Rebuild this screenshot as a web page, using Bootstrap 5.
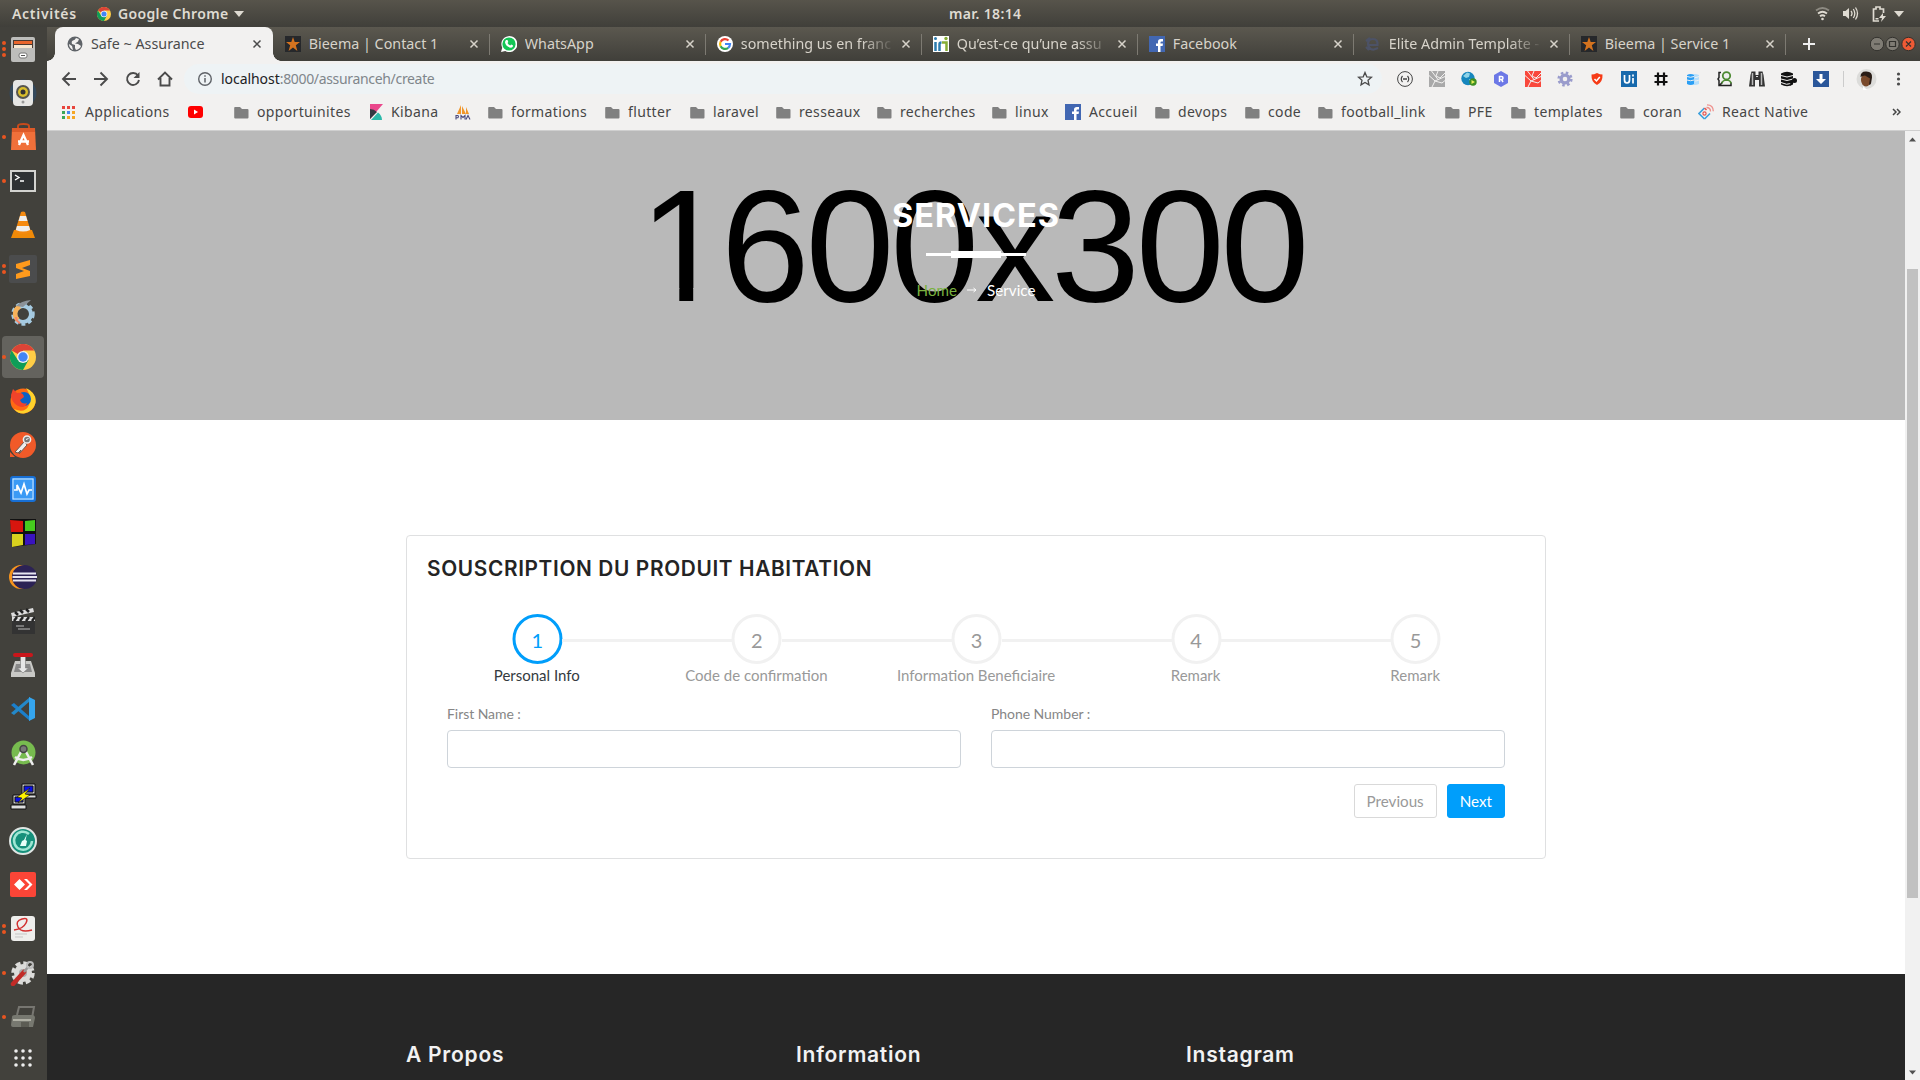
<!DOCTYPE html>
<html lang="fr">
<head>
<meta charset="utf-8">
<title>Safe ~ Assurance</title>
<link href="https://cdn.jsdelivr.net/npm/bootstrap@5.3.0/dist/css/bootstrap.min.css" rel="stylesheet">
<style>
body{width:1920px;height:1080px;overflow:hidden;background:#fff;font-family:"Noto Sans","Open Sans",sans-serif;font-size:14px;line-height:20px}
svg{display:block;flex:none}
.desk{height:1080px}
.topbar{height:27px;background:linear-gradient(#57544b,#403f3a);color:#dfdbd2;font-weight:600;font-size:14px;display:grid;grid-template-columns:97px 21px 116px 1fr 70px 901px;letter-spacing:.35px}
.topbar>*{align-self:center}
.topbar span{white-space:nowrap}
.lbl-act{padding-left:12px;letter-spacing:.7px}
.tray{display:grid;grid-template-columns:27px 30px 22px 10px;justify-content:end;align-items:center;padding-right:15px;position:relative;left:-1px}
.dock{width:47px;background:#42413c;flex:none}
.dock-item{height:44px;position:relative;display:flex;align-items:center;justify-content:center;padding-right:1px}
.dock-item.running::before{content:"";position:absolute;left:2px;top:20px;width:4px;height:4px;border-radius:50%;background:#e95420}
.dock-item.two::before{top:17px;box-shadow:0 6px #e95420}
.dock-item.three::before{top:14px;box-shadow:0 6px #e95420,0 12px #e95420}
.dock-item.current>span{position:absolute;left:2px;top:1px;width:42px;height:42px;background:#64635e;border-radius:4px}
.dock-item.current::before{z-index:1}
.dock-item svg{position:relative;top:-.5px}
.tabs{height:34px;background:linear-gradient(#5b584f,#403f3a);display:flex;padding-left:8px;color:#d7d3ca}
.tab{width:216px;height:34px;display:flex;align-items:center;padding:0 8px 0 11px;position:relative}
.tab:not(.on)::after{content:"";position:absolute;right:0;top:7px;width:1px;height:21px;background:#7d7a72}
.tab.on{background:#f2f1f0;color:#4b4b4b;border-radius:8px 8px 0 0;width:218px;margin-right:.8px;padding-left:12px}
.tab.on::before,.tab.on::after{content:"";position:absolute;bottom:0;width:8px;height:8px}
.tab.on::before{left:-8px;background:radial-gradient(circle at 0 0,transparent 7.5px,#f2f1f0 8px)}
.tab.on::after{right:-8px;background:radial-gradient(circle at 100% 0,transparent 7.5px,#f2f1f0 8px)}
.tab-name{margin-left:8px;width:154px;overflow:hidden;white-space:nowrap;flex:none;font-size:14.3px}
.fade-end .tab-name{-webkit-mask-image:linear-gradient(90deg,#000 78%,transparent);mask-image:linear-gradient(90deg,#000 78%,transparent)}
.tab>svg:last-child{margin-left:auto}
.toolbar{height:36px;background:#f2f1f0;padding-left:14px}
.navs{display:grid;grid-template-columns:repeat(4,32px);width:123px}
.address{width:1198px;height:30px;border-radius:15px;background:#eef3f5;color:#80868b;padding:0 9px 0 13px;font-size:14px;letter-spacing:-.33px}
.address b{font-weight:400;color:#202124;letter-spacing:-.05px}
.exts{display:grid;grid-template-columns:repeat(14,32px);justify-items:center;align-items:center;margin-left:7px}
.marks{height:34px;background:#f2f1f0;border-bottom:1px solid #cfcfcf;padding-left:15px;padding-bottom:3px;display:grid;grid-template-columns:126px 46px 135px 86px 33px 117px 85px 86px 101px 115px 73px 90px 90px 73px 127px 66px 109px 78px 194px 1fr;color:#464646;letter-spacing:.35px}
.marks>div{display:flex;align-items:center;gap:8px;white-space:nowrap}
.page-area{height:949px}
.site{width:1858px;font-family:Lato,sans-serif;color:#868686}
.hero{height:289px;background:#b9b9b9;position:relative;text-align:center;color:#fff}
.hero-bg{position:absolute;left:0;right:0;top:28px;padding-left:589px;text-align:left;font:160px/174px "Liberation Sans",sans-serif;letter-spacing:-4.2px;color:#000}
.hero-bg span{display:inline-block;margin:0 -3px 0 3px;clip-path:polygon(0 0,100% 0,100% 129px,54.2px 129px,54.2px 100%,40.3px 100%,40.3px 129px,0 129px)}
.hero-in{position:relative;padding-top:66px}
.hero h1{font:700 32.5px/38px Inter,sans-serif;margin:0;letter-spacing:1px}
.rule{width:100px;height:3px;background:#fff;margin:18px auto 0;display:flex;justify-content:center;align-items:center}
.rule i{width:50px;height:7px;background:#fff;flex:none}
.crumb{margin-top:23px;font-size:15.2px;line-height:22px;gap:10px}
.crumb a{color:#78b13f;text-decoration:none}
.wizard{width:1140px;height:324px;margin:115px 0 115px 359px;border:1px solid #dfe0e1;border-radius:4px;padding:19px 20px}
.wizard h2{font:600 20.8px/28px Inter,sans-serif;color:#242424;margin:0 0 31px;letter-spacing:.65px}
.step{flex:1;text-align:center;font-size:15px;line-height:22px;color:#999;position:relative}
.step+.step::before{content:"";position:absolute;height:3px;top:25px;right:calc(50% + 24px);width:170px;background:#f1f1f1}
.dot{width:50px;height:50px;border-radius:50%;border:3px solid #f1f1f1;margin:0 auto;font-size:20px;line-height:46px;transform:translateX(.5px)}
.step.active{color:#343a40}
.step.active .dot{border-color:#009efb;color:#009efb}
.fields{padding:18px 20px 0;gap:30px}
.fields label{font-size:14px;line-height:20px;display:block;margin-bottom:6px;letter-spacing:-.05px}
.fields .form-control{height:38px;border-color:#ced4da;border-radius:4px}
.acts{padding:16px 20px 0;gap:10px}
.acts .btn{font-size:15.2px;line-height:22px;height:34px;padding:5px 12px;border-radius:3px}
.btn-prev{border:1px solid #d9d9d9;color:#999}
.btn-next{background:#009efb;color:#fff;border-color:#009efb}
.foot{height:106px;background:#262626;padding:66px 0 0 359px;display:grid;grid-template-columns:390px 390px 1fr}
.foot h3{font:600 21px/30px Inter,sans-serif;color:#f2f2f2;margin:0;letter-spacing:.75px}
.sbar{width:15px;background:#f1f1f1;display:flex;flex-direction:column;align-items:center;padding:6px 0 5px}
.thumb{width:11px;height:629px;background:#c1c1c1;margin-top:127px}
</style>
<script src="https://cdn.jsdelivr.net/npm/bootstrap@5.3.0/dist/js/bootstrap.bundle.min.js"></script>
</head>
<body>
<svg width="0" height="0" class="position-absolute">
<symbol id="chrome" viewBox="0 0 26 26"><circle cx="13" cy="13" r="13" fill="#ffcd46"/><path d="M13 13L1.700 6.500A13 13 0 0 1 24.300 6.500H13z" fill="#db4437"/><path d="M13 13L7.800 16 1.700 6.500A13 13 0 0 0 13 26l5.500-10z" fill="#0f9d58"/><circle cx="13" cy="13" r="6" fill="#f1f1f1"/><circle cx="13" cy="13" r="4.700" fill="#4285f4"/></symbol>
<symbol id="folder" viewBox="0 0 15 13"><path d="M1 1h5l2 2h5.500q1 0 1 1v7.500q0 1-1 1H1.200q-1 0-1-1V2q0-1 .8-1z" fill="#808080"/></symbol>
<symbol id="fb" viewBox="0 0 16 16"><path fill="#4267b2" d="M0 0h16v16H0z"/><path fill="#fff" d="M9 16v-6H7V7.600h2V5.800Q9 3 11.700 3H14v2.400h-1.500q-1 0-1 1v1.200H14L13.600 10h-2.100v6z"/></symbol>
<symbol id="star5" viewBox="0 0 16 16"><path fill="#26282b" d="M0 0h16v16H0z"/><path fill="#d4731f" d="M8 1l1.700 5H15l-4.200 3.200L12.400 15 8 11.400 3.600 15l1.600-5.800L1 6h5.300z"/></symbol>
<symbol id="x" viewBox="0 0 16 16"><path d="M4.500 4.500l7 7m0-7l-7 7" stroke="currentColor" stroke-width="1.500"/></symbol>
<symbol id="lara" viewBox="0 0 16 16"><path fill="currentColor" d="M0 0h16v16H0z"/><path d="M0 4.500l6 5.500 10-4.500M6 10l-3 6M2.500 0L9 8.500M9 0L7 5l4 2 5-5M6 10l7 2 3-2.500" stroke="#f2f1f0" fill="none" stroke-width="1"/></symbol>
</svg>
<div class="desk d-flex flex-column">
<header class="topbar">
<span class="lbl-act">Activités</span>
<svg width="14" height="14"><use href="#chrome"/></svg>
<span>Google Chrome</span>
<svg width="10" height="6"><path d="M0 0h10L5 6z" fill="#dfdbd2"/></svg>
<span>mar. 18:14</span>
<div class="tray">
<svg width="15" height="15" viewBox="0 0 15 15" fill="none" stroke="#dfdbd2" stroke-width="1.800"><path d="M1 4.500q6.500-5 13 0" stroke="#8d8a82"/><path d="M3 7.500q4.500-3.500 9 0M5 10.300q2.500-2 5 0"/><circle cx="7.500" cy="13" r="1.300" fill="#dfdbd2" stroke="none"/></svg>
<svg width="17" height="15" viewBox="0 0 17 15"><path d="M1 5h2.500L7 2v11L3.500 10H1z" fill="#dfdbd2"/><path d="M9 5q2 2.500 0 5M11.300 3q3 4.500 0 9M13.500 1.500q4 6 0 12" stroke="#dfdbd2" fill="none" stroke-width="1.300"/></svg>
<svg width="15" height="16" viewBox="0 0 15 16"><path d="M7 15H1.500V3H4V1h4v2h3.500v4" fill="none" stroke="#dfdbd2" stroke-width="1.700"/><path d="M11 7l-4 5h3l-1 4 5-6h-3z" fill="#dfdbd2"/><path d="M3.500 12h3v1.500h-3z" fill="#dfdbd2"/></svg>
<svg width="10" height="6"><path d="M0 0h10L5 6z" fill="#dfdbd2"/></svg>
</div>
</header>
<div class="d-flex flex-grow-1">
<aside class="dock">
<div class="dock-item running three"><svg width="26" height="26" viewBox="0 0 26 26"><rect x="1" y="1" width="24" height="25" rx="2" fill="#bdbdbb"/><path fill="#4a3a32" d="M3 4h20v8H3z"/><path fill="#e9652c" d="M4 5h18v3H4z"/><path fill="#f7e6cf" d="M4 9h18v3H4z"/><rect x="9" y="17" width="8" height="5" rx="2" fill="#fff" stroke="#777"/><path stroke="#555" d="M11 19.500h4"/></svg></div>
<div class="dock-item"><svg width="28" height="28" viewBox="0 0 28 28"><circle cx="14" cy="14" r="13.500" fill="#34495c"/><rect x="4" y="1" width="20" height="26" rx="4" fill="#e6e6e4"/><circle cx="14" cy="13" r="7" fill="#55554f"/><circle cx="14" cy="13" r="5" fill="#d8bd2c"/><circle cx="14" cy="13" r="2.500" fill="#333"/><circle cx="14" cy="23" r="1.500" fill="#999"/></svg></div>
<div class="dock-item running"><svg width="27" height="28" viewBox="0 0 27 28"><path d="M8 6V3q0-2 5.500-2T19 3v3" fill="none" stroke="#c84a1b" stroke-width="2"/><path d="M2 5h23l1 22H1z" fill="#f0703a"/><path d="M2 5h23v4H2z" fill="#dd5a28"/><path d="M9 22l4.500-10L18 22M8 18.500h11" fill="none" stroke="#fff" stroke-width="2.300"/></svg></div>
<div class="dock-item running"><svg width="26" height="22" viewBox="0 0 26 22"><rect x="1" y="1" width="24" height="20" fill="#2f3234" stroke="#d3d3d0" stroke-width="2"/><path d="M5 5l4 2.500L5 10m5 1h4" fill="none" stroke="#fff" stroke-width="1.400"/></svg></div>
<div class="dock-item"><svg width="24" height="27" viewBox="0 0 24 27"><path d="M3 19h18l3 8H0z" fill="#f08a08"/><path d="M10 1q2-1 4 0l6 20q-8 4-16 0z" fill="#f58a10"/><path d="M9 5h6l1.500 5h-9zM6 15h12l1.200 4q-7 3-14.400 0z" fill="#eee"/></svg></div>
<div class="dock-item running two"><svg width="28" height="28" viewBox="0 0 28 28"><rect width="28" height="28" rx="2" fill="#4b4c4d"/><path d="M7 9l14-4v5l-8 3 8 3v5L7 24v-5l8-3-8-3z" fill="#ff9a1c"/></svg></div>
<div class="dock-item"><svg width="24" height="26" viewBox="0 0 24 26"><circle cx="12" cy="14" r="8" fill="none" stroke="#a6cbe2" stroke-width="4"/><circle cx="12" cy="14" r="10.500" fill="none" stroke="#a6cbe2" stroke-width="2.500" stroke-dasharray="4 3"/><path d="M9 6.500a8 8 0 0 0-2 13.500" fill="none" stroke="#f6b25a" stroke-width="4.500"/><path d="M5 17q0 4 4 6" fill="none" stroke="#f5856a" stroke-width="2"/><path d="M5 6Q10 1 20 0L12 7z" fill="#8b9197"/></svg></div>
<div class="dock-item running current"><span></span><svg width="26" height="26"><use href="#chrome"/></svg></div>
<div class="dock-item"><svg width="26" height="27" viewBox="0 0 26 27"><circle cx="13" cy="14" r="12.500" fill="#ff6a13"/><path d="M16 1q11 5 9.500 15Q23 25 14 26.500 8 27 4 22q11 5 15-4Q22 10 16 1z" fill="#ffd22b"/><circle cx="14" cy="12" r="7" fill="#0c62c4"/><path d="M1 8l2-6 4 4q6-1 7 4l-4 3q2 5 7 3-2 6-9 3Q1 15 1 8z" fill="#f0432a"/></svg></div>
<div class="dock-item"><svg width="26" height="26" viewBox="0 0 26 26"><circle cx="13" cy="13" r="13" fill="#f15a29"/><path d="M0 20l5 5H0z" fill="#f15a29"/><path d="M14.500 9.500L5 20l3 1 3-3-2 4 8-9z" fill="#eee" stroke="#6b5a52" stroke-width="1"/><circle cx="17" cy="7.500" r="3.600" fill="#777" stroke="#eee" stroke-width="1.500"/><path d="M16 7.500l2.500-1" stroke="#fff"/></svg></div>
<div class="dock-item"><svg width="26" height="26" viewBox="0 0 26 26"><rect x="1" y="1" width="24" height="24" rx="2" fill="#3a9af5" stroke="#176fd5" stroke-width="2"/><rect x="3" y="3" width="20" height="20" fill="none" stroke="#cfe7ff"/><path d="M4 14h3V9l4 8 3-9 3 10 2-4h3" fill="none" stroke="#fff" stroke-width="1.700"/></svg></div>
<div class="dock-item"><svg width="26" height="28" viewBox="0 0 26 28"><path fill="#111" d="M0 0h26v25L3 28z"/><path d="M0 1l13 1v11H1z" fill="#d8150e"/><path d="M15 2l10-1v11H15z" fill="#46cc1e"/><path d="M2 15h11v11l-11 2z" fill="#d8d21e"/><path d="M15 15h10v10l-10 1z" fill="#3a14bf"/></svg></div>
<div class="dock-item"><svg width="28" height="26" viewBox="0 0 28 26"><ellipse cx="12" cy="13" rx="12" ry="12" fill="#f7941e"/><ellipse cx="15.500" cy="13" rx="12.500" ry="12" fill="#2c2255"/><path d="M4 9.500h23M3.500 13H28M4 16.500h23" stroke="#e8e6f2" stroke-width="1.800"/></svg></div>
<div class="dock-item"><svg width="24" height="26" viewBox="0 0 24 26"><path d="M0 5l22-5 1 4L1 9z" fill="#ddd"/><path d="M4 4l3 3m2-5l3 3m3-4l3 3" stroke="#222" stroke-width="2.500"/><path d="M1 9h23v17H1z" fill="#333"/><path d="M1 9h23v4H1z" fill="#ddd"/><path d="M3 13l3-4m3 4l3-4m3 4l3-4m3 4l3-4" stroke="#222" stroke-width="2.500"/><path d="M5 18h8m-6 3h12" stroke="#bbb"/></svg></div>
<div class="dock-item"><svg width="24" height="26" viewBox="0 0 24 26"><path d="M4 9h16l4 12v4H0v-4z" fill="#c9c9c6"/><path d="M5 12h14l2 8H3z" fill="#888"/><path d="M9.500 3h5v13h3L12 21l-5.500-5h3z" fill="#e6e6e6" stroke="#777" stroke-width=".6"/><rect x="2" y="1" width="20" height="4" rx="2" fill="#c9161b"/></svg></div>
<div class="dock-item"><svg width="26" height="24" viewBox="0 0 26 24"><path d="M1 8l3-2 16 14v4z" fill="#1b7fcc"/><path d="M1 16l3 2L20 4V0z" fill="#2489ca"/><path d="M19 0l6 3v18l-6 3z" fill="#35a5ee"/></svg></div>
<div class="dock-item"><svg width="25" height="26" viewBox="0 0 25 26"><circle cx="12.500" cy="12.500" r="12" fill="#77bb4f"/><path d="M11 10L3 25m11-15l8 15M4 17q8 6 17 0" stroke="#eee" stroke-width="2.500" fill="none"/><circle cx="12.500" cy="9" r="3.500" fill="#777" stroke="#444" stroke-width="1.500"/></svg></div>
<div class="dock-item"><svg width="27" height="27" viewBox="0 0 27 27"><g stroke="#111"><path d="M12 1h13v10H12z" fill="#ccc"/><path d="M14 3h9v6h-9z" fill="#0b10e5"/><path d="M12 12h14v3H12z" fill="#ddd"/><path d="M3 12h12v9H3z" fill="#ccc"/><path d="M5 14h8v5H5z" fill="#0b10e5"/><path d="M1 22h15v4H1z" fill="#ddd"/><path d="M20 5l-13 9 5 1-4 5 12-8-5-1z" fill="#fff200" stroke-width=".6"/></g></svg></div>
<div class="dock-item"><svg width="28" height="28" viewBox="0 0 28 28"><circle cx="14" cy="14" r="13" fill="#16907b" stroke="#dfe5e3" stroke-width="2"/><path d="M20 7a9 9 0 1 0 3 7" fill="none" stroke="#9fe6d3" stroke-width="2.500"/><path d="M18 7l-3 6-2 1-2 5h6l1-5-1.500-1z" fill="#e8fff8"/></svg></div>
<div class="dock-item"><svg width="26" height="25" viewBox="0 0 26 25"><rect width="26" height="25" rx="2" fill="#fb4537"/><path d="M4 12.500L9.500 7l5.500 5.500L9.500 18zM14 7l5.500 5.500L14 18h3l5.500-5.500L17 7z" fill="#fff"/></svg></div>
<div class="dock-item running two"><svg width="24" height="25" viewBox="0 0 24 25"><rect width="24" height="25" rx="3" fill="#eeeeec"/><path d="M3 14q9-1 12-7t-4-4-4 8 14 3" fill="none" stroke="#d22f2f" stroke-width="1.500"/><path d="M4 18h12M4 21h8" stroke="#c5c5c5"/></svg></div>
<div class="dock-item running"><svg width="26" height="26" viewBox="0 0 26 26"><circle cx="13" cy="13" r="9" fill="#dcdcda"/><circle cx="13" cy="13" r="10" fill="none" stroke="#dcdcda" stroke-width="3.500" stroke-dasharray="5 2.850"/><circle cx="13" cy="13" r="4" fill="#aaa"/><path d="M3 24L14 12" stroke="#c22b27" stroke-width="4.500" stroke-linecap="round"/><path d="M14 12l4-5" stroke="#999" stroke-width="2.500"/><circle cx="20" cy="5" r="3" fill="none" stroke="#bbb" stroke-width="2"/></svg></div>
<div class="dock-item running"><svg width="26" height="24" viewBox="0 0 26 24"><path d="M7 10L9 2h15l-2 11" fill="none" stroke="#777671" stroke-width="2"/><path d="M2 12q0-2 3-2h17q3 0 3 3l-2 9H3q-2 0-2-2z" fill="#777870"/><path d="M3 15h18" stroke="#b0b0a5" stroke-width="2"/><path d="M11 17h8v5h-8z" fill="#5c5c54"/></svg></div>
<div class="dock-item" style="height:39px"><svg width="20" height="20" viewBox="0 0 20 20" fill="#eee"><g id="r"><circle cx="3" cy="3" r="1.800"/><circle cx="10" cy="3" r="1.800"/><circle cx="17" cy="3" r="1.800"/></g><use href="#r" y="7"/><use href="#r" y="14"/></svg></div>
</aside>
<main class="flex-grow-1">
<nav class="tabs">
<div class="tab on"><svg width="16" height="16" viewBox="0 0 16 16"><circle cx="8" cy="8" r="7.500" fill="#5f6368"/><path d="M9 2q-1 2-3 2.500T5 8l3 1v3l1 2q4-1 5-4l-3-2-3-.5 3-2 1-2.500zM2 8l3 2 1 4q-4-2-4-6z" fill="#f2f1f0"/></svg><span class="tab-name">Safe ~ Assurance</span><svg width="16" height="16"><use href="#x"/></svg></div>
<div class="tab"><svg width="16" height="16"><use href="#star5"/></svg><span class="tab-name">Bieema | Contact 1</span><svg width="16" height="16"><use href="#x"/></svg></div>
<div class="tab"><svg width="16" height="16" viewBox="0 0 16 16"><path d="M0 16l1.200-4.300A8 8 0 1 1 4.300 15z" fill="#fff"/><circle cx="8" cy="8" r="6.600" fill="#14c656"/><path d="M5 4l1.500 0 .8 2-.8 1q1 1.800 2.700 2.600l1-1 1.900 1q0 2-2 2.200Q5 11 4 6.500 4 5 5 4z" fill="#fff"/></svg><span class="tab-name">WhatsApp</span><svg width="16" height="16"><use href="#x"/></svg></div>
<div class="tab fade-end"><svg width="16" height="16" viewBox="0 0 16 16" fill="none" stroke-width="2.200"><circle cx="8" cy="8" r="8" fill="#fff"/><path d="M11.500 4.500A5 5 0 0 0 3.600 5.800" stroke="#ea4335"/><path d="M3.600 5.800a5 5 0 0 0 0 4.400" stroke="#fbbc05"/><path d="M3.600 10.200a5 5 0 0 0 7.600 1.600" stroke="#34a853"/><path d="M11.200 11.800A5 5 0 0 0 13 8H8" stroke="#4285f4"/></svg><span class="tab-name">something us en franc</span><svg width="16" height="16"><use href="#x"/></svg></div>
<div class="tab fade-end"><svg width="16" height="16" viewBox="0 0 16 16"><path fill="#fff" d="M0 0h16v16H0z"/><path d="M2.500 15V6M6.500 15V8q0-1.500 2-1.500" stroke="#2d7cae" stroke-width="2.500" fill="none"/><path d="M9 6.500h4.500V15" stroke="#86ad35" stroke-width="2.500" fill="none"/><circle cx="2.500" cy="2.500" r="1.500" fill="#2d7cae"/><circle cx="13" cy="2.500" r="1.700" fill="#86ad35"/></svg><span class="tab-name">Qu’est-ce qu’une assu</span><svg width="16" height="16"><use href="#x"/></svg></div>
<div class="tab"><svg width="16" height="16"><use href="#fb"/></svg><span class="tab-name">Facebook</span><svg width="16" height="16"><use href="#x"/></svg></div>
<div class="tab fade-end"><svg width="16" height="16" viewBox="0 0 16 16"><path d="M3 9h9.500Q13 3 8 3 3 3 3 8.500 4 14 9 13.500l4-1.500M1 5l4-3M1 11l3 3" fill="none" stroke="#4c5266" stroke-width="2.200"/></svg><span class="tab-name">Elite Admin Template -</span><svg width="16" height="16"><use href="#x"/></svg></div>
<div class="tab"><svg width="16" height="16"><use href="#star5"/></svg><span class="tab-name">Bieema | Service 1</span><svg width="16" height="16"><use href="#x"/></svg></div>
<div class="d-flex align-items-center flex-grow-1 justify-content-between ps-3 pe-1"><svg width="14" height="14"><path d="M7 1v12M1 7h12" stroke="#eee" stroke-width="2"/></svg>
<svg width="46" height="16" viewBox="0 0 46 16"><g stroke="#33322e"><circle cx="7" cy="8" r="6.700" fill="#7f7c74"/><circle cx="22.500" cy="8" r="6.700" fill="#7f7c74"/><circle cx="38.500" cy="8" r="6.700" fill="#ee5a35"/><path d="M4 8h6M19.500 5.500h6v5h-6zM36 5.500l5 5m0-5l-5 5" fill="none" stroke-width="1.200"/></g></svg></div>
</nav>
<div class="toolbar d-flex align-items-center">
<div class="navs">
<svg width="16" height="16" viewBox="0 0 16 16"><path d="M15 8H2m6.500-6.500L2 8l6.500 6.500" fill="none" stroke="#4b4b4b" stroke-width="1.900"/></svg>
<svg width="16" height="16" viewBox="0 0 16 16"><path d="M1 8h13M7.500 1.500L14 8l-6.500 6.500" fill="none" stroke="#4b4b4b" stroke-width="1.900"/></svg>
<svg width="16" height="16" viewBox="0 0 16 16"><path d="M13 4.500A6 6 0 1 0 14 9" fill="none" stroke="#4b4b4b" stroke-width="1.900"/><path d="M14.500 1v6h-6z" fill="#4b4b4b"/></svg>
<svg width="16" height="16" viewBox="0 0 16 16"><path d="M1 8.500L8 1.500l7 7M3.500 7v7.500h9V7" fill="none" stroke="#4b4b4b" stroke-width="1.900"/></svg></div>
<div class="address d-flex align-items-center"><svg width="16" height="16" viewBox="0 0 16 16" class="me-2"><circle cx="8" cy="8" r="6.300" fill="none" stroke="#5f6368" stroke-width="1.400"/><path d="M8 7v4.500M8 4.300v1.500" stroke="#5f6368" stroke-width="1.500"/></svg><span><b>localhost</b>:8000/assuranceh/create</span>
<svg class="ms-auto" width="16" height="16" viewBox="0 0 16 16"><path d="M8 1.500l1.800 4.300 4.700.4-3.500 3 1 4.600L8 11.400l-4 2.400 1-4.600-3.500-3 4.700-.4z" fill="none" stroke="#4b4b4b" stroke-width="1.300"/></svg></div>
<div class="exts">
<svg width="16" height="16" viewBox="0 0 16 16" fill="none" stroke="#444"><circle cx="8" cy="8" r="7.400"/><path d="M5.500 5Q3 8 5.500 11m5-6q2.500 3 0 6" stroke-width="1.200"/><path d="M6 8h4" stroke-width="1.500"/></svg>
<svg width="16" height="16" color="#a9a9a9"><use href="#lara"/></svg>
<svg width="16" height="16" viewBox="0 0 16 16"><circle cx="7" cy="7.500" r="6.700" fill="#1686bd"/><path d="M2 5l4-3.500 3 1L8 6 5 7zM8 8l3 0-1 4z" fill="#8fd3e8"/><circle cx="12" cy="11" r="3.700" fill="#3e8f22"/><path d="M10.500 9l3.500 2-3.500 2z" fill="#e8ef5a"/></svg>
<svg width="16" height="16" viewBox="0 0 16 16"><path d="M8 0l7 4v8l-7 4-7-4V4z" fill="#6c78e6"/><path d="M6.500 11V5.500h2q1.500 0 1.500 1.500t-1.500 1.500h-2m2 0L10 11" fill="none" stroke="#fff" stroke-width="1.500"/></svg>
<svg width="16" height="16" color="#f9483c"><use href="#lara"/></svg>
<svg width="16" height="16" viewBox="0 0 16 16" fill="none" stroke="#9a9ccc"><circle cx="8" cy="8" r="3.900" stroke-width="3.200"/><circle cx="8" cy="8" r="6.300" stroke-width="2.600" stroke-dasharray="2.500 2.450"/></svg>
<svg width="14" height="14" viewBox="0 0 14 14"><path d="M7 1q3 1.500 5.500 1.500Q13 10 7 13 1 10 1.500 2.500 4 2.500 7 1z" fill="#f63b16"/><path d="M4.500 7l2 2 3.300-4" stroke="#fff" stroke-width="1.500" fill="none"/></svg>
<svg width="16" height="16" viewBox="0 0 16 16"><path d="M0 0h16v16H0z" fill="#1769ac"/><path d="M3.500 4v5q0 3 2.500 3t2.500-3V4M12 7v5.500M12 3.500v2" stroke="#fff" stroke-width="1.700" fill="none"/></svg>
<svg width="16" height="16" viewBox="0 0 16 16"><path d="M5 1.500v13m6-13v13M1.500 5h13m-13 6h13" stroke="#111" stroke-width="2.200"/></svg>
<svg width="14" height="14" viewBox="0 0 14 14"><path d="M4 3q4.500-2 9 0v9q-4.500 2-9 0z" fill="#b5dffc"/><path d="M1 3q3.500-2 7 0v9q-3.500 2-7 0z" fill="#2b9ff5"/><path d="M1 4.500q3.500 1.500 7 0m5 0q-2 1-4 1M1 8q3.500 1.500 7 0m5 0q-2 1-4 1" stroke="#f2f1f0" fill="none"/></svg>
<svg width="16" height="16" viewBox="0 0 16 16"><path d="M4 1.500H2v5L1 8l1 1.500v5h12v-3M3 14l2.500-3" fill="none" stroke="#222" stroke-width="1.500"/><circle cx="9.500" cy="4.800" r="3.700" fill="#eee" stroke="#4d8a33" stroke-width="1.800"/><path d="M5 12.500q0-3 4.500-3.500 4.500.5 4.500 3.500" fill="none" stroke="#4d8a33" stroke-width="1.700"/></svg>
<svg width="16" height="16" viewBox="0 0 16 16"><path d="M1.500 4l1-3.500h4V4h3V.5h4l1 3.500L16 15.500h-6V9H6v6.500H0z" fill="#333"/><path d="M3.500 2v12M12.500 2v12" stroke="#bbb" stroke-width="1.500"/><path d="M7 5.500h2" stroke="#ddd"/></svg>
<svg width="16" height="16" viewBox="0 0 16 16"><path d="M0 2.500q6-3.500 12 0v11q-6 3.500-12 0z" fill="#111"/><path d="M0 4.500q6 3 12 0M0 8q6 3 12 0M0 11.500q6 3 10 1" stroke="#f2f1f0" fill="none"/><circle cx="13.500" cy="9.500" r="2.500" fill="#111"/><path d="M12 11l-3 3" stroke="#111" stroke-width="1.800"/></svg>
<svg width="16" height="16" viewBox="0 0 16 16"><path d="M0 0h16v16H0z" fill="#2b579a"/><path d="M6.500 3h3v5H13l-5 5-5-5h3.500z" fill="#fff"/></svg>
</div>
<svg class="ms-1" width="68" height="24" viewBox="0 0 68 24"><path d="M2.500 4v16" stroke="#ccc"/><circle cx="25.500" cy="12" r="10" fill="#dcdcda"/><ellipse cx="25" cy="13" rx="5" ry="6.500" fill="#7a4a2c"/><path d="M19.500 10q0-6 6-5.500 6 0 5.500 6l-1 6q-1 2-2 1l1-6-5-3q-2 0-4.500 1.500z" fill="#2a1d17"/><path d="M22 19l4 4h-4z" fill="#fff"/><g fill="#4b4b4b"><circle cx="57.500" cy="7" r="1.600"/><circle cx="57.500" cy="12" r="1.600"/><circle cx="57.500" cy="17" r="1.600"/></g></svg>
</div>
<div class="marks">
<div style="gap:10px"><svg width="13" height="13" viewBox="0 0 13 13"><path d="M0 0h3v3H0zm5 0h3v3H5zm5 0h3v3h-3z" fill="#e8453c"/><path d="M0 5h3v3H0z" fill="#3aa757"/><path d="M5 5h3v3H5z" fill="#4688f1"/><path d="M10 5h3v3h-3zM5 10h3v3H5zm5 0h3v3h-3z" fill="#f5a623"/><path d="M0 10h3v3H0z" fill="#3aa757"/></svg>Applications</div>
<div><svg width="15" height="12" viewBox="0 0 15 12"><rect width="15" height="12" rx="3" fill="#f00"/><path d="M6 3.500L10 6 6 8.500z" fill="#fff"/></svg></div>
<div><svg width="15" height="13"><use href="#folder"/></svg>opportuinites</div>
<div><svg width="14" height="16" viewBox="0 0 14 16"><path d="M1 0h13L1 15z" fill="#ea478b"/><path d="M1 5q4 0 7 3l-7 7z" fill="#343741"/><path d="M9 8.500q4 3 4 7.500H2z" fill="#2bb9a9"/></svg>Kibana</div>
<div><svg width="16" height="16" viewBox="0 0 16 16"><path d="M2 10L6 1v9zM7 10V2l4 8zM11 10V3l3 7z" fill="#f0962b"/><path d="M1 15.500v-4h2q1 1.300 0 2.200H1M6 15.500v-4l2 2 2-2v4M11 15.500l2-4 2 4" stroke="#4a4a7e" stroke-width="1.100" fill="none"/></svg></div>
<div><svg width="15" height="13"><use href="#folder"/></svg>formations</div>
<div><svg width="15" height="13"><use href="#folder"/></svg>flutter</div>
<div><svg width="15" height="13"><use href="#folder"/></svg>laravel</div>
<div><svg width="15" height="13"><use href="#folder"/></svg>resseaux</div>
<div><svg width="15" height="13"><use href="#folder"/></svg>recherches</div>
<div><svg width="15" height="13"><use href="#folder"/></svg>linux</div>
<div><svg width="16" height="16"><use href="#fb"/></svg>Accueil</div>
<div><svg width="15" height="13"><use href="#folder"/></svg>devops</div>
<div><svg width="15" height="13"><use href="#folder"/></svg>code</div>
<div><svg width="15" height="13"><use href="#folder"/></svg>football_link</div>
<div><svg width="15" height="13"><use href="#folder"/></svg>PFE</div>
<div><svg width="15" height="13"><use href="#folder"/></svg>templates</div>
<div><svg width="15" height="13"><use href="#folder"/></svg>coran</div>
<div><svg width="16" height="16" viewBox="0 0 16 16" fill="none"><path d="M6.500 4L1 9.500l5.500 5.500" stroke="#3ba0dc" stroke-width="1.600"/><path d="M6.500 15l5.500-5.500" stroke="#3ba0dc" stroke-width="1.600"/><path d="M6.500 4l2 2" stroke="#e5554f" stroke-width="1.600"/><circle cx="6.500" cy="9.500" r="1.600" stroke="#e5554f" stroke-width="1.200"/><path d="M8.500 3.500q4 0 4 4M9 .8q6.300 0 6.300 6.500" stroke="#ee8f8b" stroke-width="1.300"/></svg>React Native</div>
<div><svg width="9" height="8" viewBox="0 0 9 8"><path d="M1 1l3 3-3 3m4-6l3 3-3 3" stroke="#464646" stroke-width="1.500" fill="none"/></svg></div>
</div>
<div class="page-area d-flex">
<div class="site">
<section class="hero"><div class="hero-bg"><span>1</span>600x300</div>
<div class="hero-in"><h1>SERVICES</h1><div class="rule"><i></i></div><div class="crumb d-flex justify-content-center align-items-center"><a href="#">Home</a><svg width="10" height="6" viewBox="0 0 10 6"><path d="M0 3h8M6.500 1l2.500 2-2.500 2" stroke="#fff" fill="none"/></svg><span>Service</span></div></div></section>
<section class="wizard"><h2>SOUSCRIPTION DU PRODUIT HABITATION</h2>
<div class="d-flex">
<div class="step active"><div class="dot">1</div>Personal Info</div>
<div class="step"><div class="dot">2</div>Code de confirmation</div>
<div class="step"><div class="dot">3</div>Information Beneficiaire</div>
<div class="step"><div class="dot">4</div>Remark</div>
<div class="step"><div class="dot">5</div>Remark</div>
</div>
<div class="fields d-flex"><div class="flex-fill"><label for="fn">First Name :</label><input id="fn" class="form-control"></div><div class="flex-fill"><label for="pn">Phone Number :</label><input id="pn" class="form-control"></div></div>
<div class="acts d-flex justify-content-end"><button class="btn btn-prev">Previous</button><button class="btn btn-next">Next</button></div>
</section>
<footer class="foot"><h3>A Propos</h3><h3>Information</h3><h3>Instagram</h3></footer>
</div>
<div class="sbar"><svg width="7" height="5"><path d="M0 4.500h7L3.500.5z" fill="#505050"/></svg><div class="thumb"></div><svg class="mt-auto" width="7" height="5"><path d="M0 .5h7L3.500 4.500z" fill="#505050"/></svg></div>
</div>
</main>
</div>
</div>
</body>
</html>
